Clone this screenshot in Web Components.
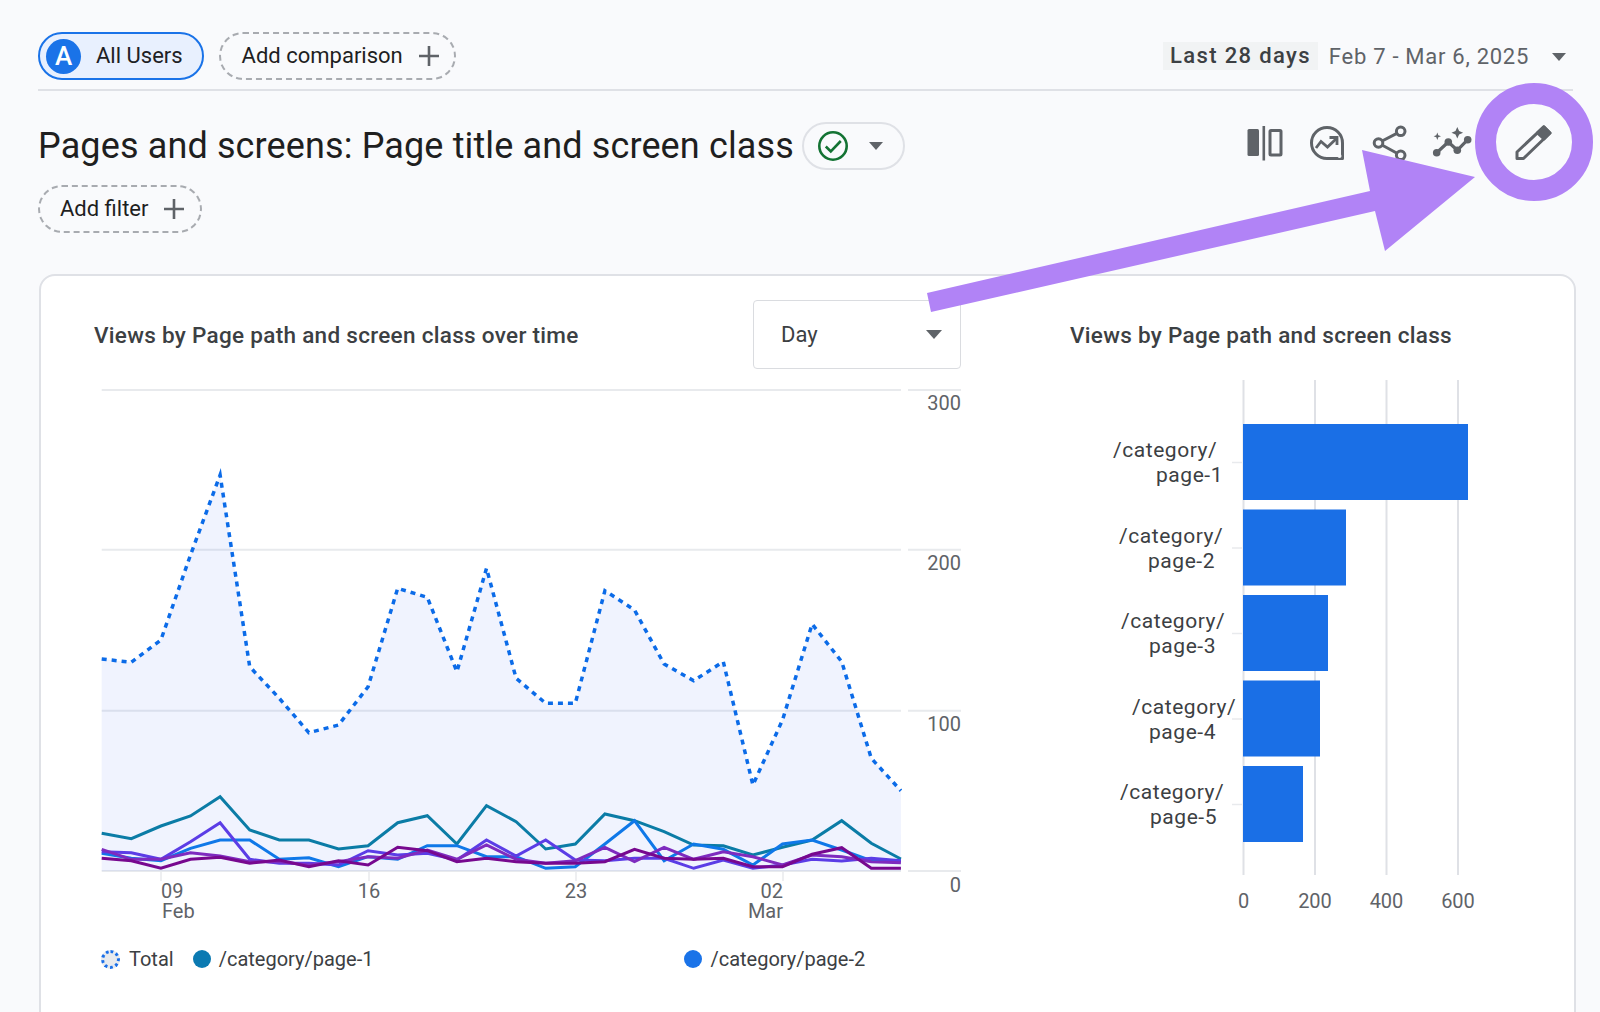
<!DOCTYPE html>
<html lang="en">
<head>
<meta charset="utf-8">
<title>Pages and screens</title>
<style>
  html,body{margin:0;padding:0;background:#f9fafc;}
  body{font-family:Roboto,"Liberation Sans",sans-serif;color:#1f1f1f;}
</style>
</head>
<body>
<ga-app>
  <ga-bar>
    <ga-chip slot="left" variant="solid" avatar="A">All Users</ga-chip>
    <ga-chip slot="left" variant="dashed" plus style="--pl:21px;--pr:14px">Add comparison</ga-chip>
    <ga-date-range slot="right" preset="Last 28 days" range="Feb 7 - Mar 6, 2025"></ga-date-range>
  </ga-bar>
  <ga-title-row>Pages and screens: Page title and screen class</ga-title-row>
  <ga-filter-row><ga-chip variant="dashed" plus style="--pl:20px;--pr:15px">Add filter</ga-chip></ga-filter-row>
  <ga-card>
    <ga-panel slot="left" heading="Views by Page path and screen class over time" select="Day">
      <ga-line-chart></ga-line-chart>
      <ga-legend></ga-legend>
    </ga-panel>
    <ga-panel slot="right" heading="Views by Page path and screen class">
      <ga-bar-chart></ga-bar-chart>
    </ga-panel>
  </ga-card>
  <ga-annotation></ga-annotation>
</ga-app>

<script>
const FONT = 'Roboto,"Liberation Sans",sans-serif';
function def(name, cls){ customElements.define(name, cls); }
class Base extends HTMLElement {
  render(html){ (this.shadowRoot || this.attachShadow({mode:'open'})).innerHTML = html; }
}

def('ga-app', class extends Base { connectedCallback(){ this.render(`<style>
  :host{display:block;position:relative;width:1600px;height:1012px;overflow:hidden;padding-top:32px;box-sizing:border-box;background:#f9fafc;font-family:${FONT};}
</style><slot></slot>`);} });

def('ga-bar', class extends Base { connectedCallback(){ this.render(`<style>
  :host{display:flex;justify-content:space-between;margin:0 27px 0 38px;padding-bottom:9px;border-bottom:2px solid #dfe1e6;}
  .g{display:flex;gap:15px;align-items:center}
</style><div class="g"><slot name="left"></slot></div><div class="g"><slot name="right"></slot></div>`);} });

def('ga-chip', class extends Base { connectedCallback(){
  const solid = this.getAttribute('variant')==='solid';
  const av = this.getAttribute('avatar');
  this.render(`<style>
  :host{display:inline-flex;align-items:center;box-sizing:border-box;height:48px;border-radius:24px;font-size:22px;line-height:1;white-space:nowrap;color:#1f1f1f;
    ${solid?'background:#e8f0fe;border:2px solid #1a73e8;padding:0 19px 0 6px;gap:15px;color:#202124;':'border:2px dashed #a8abb0;padding:0 var(--pr,14px) 0 var(--pl,20px);gap:15px;'}}
  .av{width:35px;height:35px;border-radius:50%;background:#1a73e8;color:#fff;display:flex;align-items:center;justify-content:center;font-size:26px;font-weight:500;}
  svg{display:block;width:22px;height:22px}
</style>${av?`<span class="av">${av}</span>`:''}<slot></slot>${this.hasAttribute('plus')?`<svg viewBox="0 0 22 22"><path d="M11 1v20M1 11h20" stroke="#5f6368" stroke-width="2.6" fill="none"/></svg>`:''}`);
} });

def('ga-date-range', class extends Base { connectedCallback(){ this.render(`<style>
  :host{display:flex;align-items:center;font-size:22px;height:48px;color:#5f6368;}
  .p{background:#f1f3f4;color:#3c4043;font-weight:500;height:28px;line-height:28px;padding:0 7px 0 7px;letter-spacing:1.35px;margin-right:11px;}
  .r{letter-spacing:.72px;}
  svg{display:block;width:14px;height:8px;margin:1px 7px 0 23px}
</style><span class="p">${this.getAttribute('preset')}</span><span class="r">${this.getAttribute('range')}</span><svg viewBox="0 0 14 8"><path d="M0 0h14L7 8z" fill="#5f6368"/></svg>`);} });

const ICONS = {
 split:`<svg viewBox="1244.5 121 40 40"><rect x="1247" y="127" width="11.5" height="27" rx="1.5" fill="#5f6368"/><rect x="1262" y="124" width="2.6" height="34.5" fill="#5f6368"/><rect x="1269.5" y="128.5" width="11" height="24.5" rx="1" fill="none" stroke="#5f6368" stroke-width="3"/></svg>`,
 insights:`<svg viewBox="1307 121 40 40"><path d="M1327 125.5a15.5 15.5 0 0 1 15.5 15.5v15.5H1327a15.5 15.5 0 0 1 0-31z" fill="none" stroke="#5f6368" stroke-width="3" stroke-linejoin="round"/><path d="M1316 146l5-6.5 6.5 5.5 9-8.500" fill="none" stroke="#5f6368" stroke-width="2.800"/><path d="M1329.500 135.500h7.500v7.500" fill="none" stroke="#5f6368" stroke-width="2.800"/><circle cx="1339.500" cy="154" r="2" fill="#f9fafc"/></svg>`,
 share:`<svg viewBox="1370 121 40 40"><path d="M1378.300 141L1400.700 129.300M1378.300 141L1400.700 153.300" stroke="#5f6368" stroke-width="3" fill="none"/><g fill="#f9fafc" stroke="#5f6368" stroke-width="3"><circle cx="1400.700" cy="129.300" r="4.300"/><circle cx="1378.500" cy="141" r="4.300"/><circle cx="1400.700" cy="153.300" r="4.300"/></g></svg>`,
 spark:`<svg viewBox="1432 121 40 40"><path d="M1436.700 150.700L1448.300 140L1457.300 148.300L1467.700 137.700" stroke="#5f6368" stroke-width="3.200" fill="none"/><g fill="#5f6368"><circle cx="1436.700" cy="150.700" r="3.800"/><circle cx="1448.300" cy="140" r="3.800"/><circle cx="1457.300" cy="148.300" r="3.800"/><circle cx="1467.700" cy="137.700" r="3.800"/><path d="M1457.300 125l1.800 4 4 1.800-4 1.800-1.800 4-1.800-4-4-1.800 4-1.800z"/><path d="M1437.300 130.500l1 2.700 2.700 1-2.700 1-1 2.700-1-2.700-2.700-1 2.700-1z"/></g></svg>`,
 pencil:`<svg viewBox="1513 121 40 40"><path d="M1517 156.500v-6.500L1543.800 124.800 1550 131 1523.500 156.500z" fill="none" stroke="#5f6368" stroke-width="3" stroke-linejoin="round"/><path d="M1537.500 130.800L1543.800 124.800 1550 131 1544 137z" fill="#5f6368" stroke="#5f6368" stroke-width="3" stroke-linejoin="round"/></svg>`
};
def('ga-icon', class extends Base { connectedCallback(){ this.render(`<style>:host{display:block;width:40px;height:40px}svg{display:block;width:40px;height:40px}</style>${ICONS[this.getAttribute('name')]}`);} });

def('ga-title-row', class extends Base { connectedCallback(){ this.render(`<style>
  :host{display:flex;align-items:center;justify-content:space-between;margin:31px 47px 0 38px;height:48px;}
  .l{display:flex;align-items:center;gap:8px}
  h1{margin:0;font-weight:400;font-size:36px;line-height:48px;color:#1f1f1f;letter-spacing:.13px;white-space:nowrap}
  .st{display:flex;align-items:center;box-sizing:border-box;width:103px;height:48px;border:2px solid #dfe1e6;border-radius:24px;padding-left:13px;}
  .st svg{display:block}
  .ic{display:flex;gap:22.500px;margin-top:-6px}
  .ic ga-icon:last-child{margin-left:18.500px}
</style><div class="l"><h1><slot></slot></h1><div class="st"><svg width="32" height="32" viewBox="0 0 32 32"><circle cx="16" cy="16" r="13.700" fill="none" stroke="#137333" stroke-width="2.600"/><path d="M8.800 16.500l5 5 10-10.500" fill="none" stroke="#137333" stroke-width="2.600"/></svg><svg width="14" height="8" viewBox="0 0 14 8" style="margin-left:20px"><path d="M0 0h14L7 8z" fill="#5f6368"/></svg></div></div>
<div class="ic"><ga-icon name="split"></ga-icon><ga-icon name="insights"></ga-icon><ga-icon name="share"></ga-icon><ga-icon name="spark"></ga-icon><ga-icon name="pencil"></ga-icon></div>`);} });

def('ga-filter-row', class extends Base { connectedCallback(){ this.render(`<style>:host{display:flex;margin:15px 0 0 38px}</style><slot></slot>`);} });

def('ga-card', class extends Base { connectedCallback(){ this.render(`<style>
  :host{display:grid;grid-template-columns:960px 1fr;margin:41px 24px 0 39px;height:770px;box-sizing:border-box;background:#fff;border:2px solid #dfe1e6;border-radius:16px;}
</style><slot name="left"></slot><slot name="right"></slot>`);} });

def('ga-panel', class extends Base { connectedCallback(){
  const sel = this.getAttribute('select');
  this.render(`<style>
  :host{display:flex;flex-direction:column;padding-top:24px;min-width:0;}
  .h{display:flex;align-items:center;justify-content:space-between;height:69px;padding:0 40px 0 ${sel?53:69}px;box-sizing:border-box;}
  h2{margin:0;font-size:22.500px;font-weight:500;color:#3c4043;letter-spacing:.3px;white-space:nowrap}
  .s{display:flex;align-items:center;justify-content:space-between;box-sizing:border-box;width:208px;height:69px;border:1.500px solid #dadce0;border-radius:4px;padding:0 18px 0 27px;font-size:22px;color:#3c4043;background:#fff;}
</style><div class="h"><h2>${this.getAttribute('heading')}</h2>${sel?`<div class="s">${sel}<svg width="16" height="9" viewBox="0 0 16 9"><path d="M0 0h16L8 9z" fill="#5f6368"/></svg></div>`:''}</div><slot></slot>`);
} });

def('ga-line-chart', class extends Base { connectedCallback(){
  const X = i => 101.7 + 29.6*i, Y = z => 440 + z/3;
  const S = {
   total:[657,667,600,345,105,680,775,878,855,740,445,472,695,385,715,790,790,452,510,672,722,665,1035,840,552,665,955,1052],
   teal:[1180,1196,1158,1128,1070,1170,1200,1200,1227,1217,1148,1127,1212,1097,1145,1227,1212,1122,1142,1175,1215,1217,1245,1222,1200,1142,1210,1257],
   blue:[1240,1255,1262,1225,1200,1200,1258,1253,1280,1250,1258,1217,1217,1250,1250,1285,1280,1212,1142,1262,1212,1228,1275,1212,1200,1230,1262,1262],
   indigo:[1235,1238,1258,1205,1148,1258,1270,1270,1275,1232,1245,1240,1260,1200,1248,1200,1260,1262,1255,1255,1285,1260,1285,1275,1258,1263,1255,1262],
   purple:[1228,1258,1258,1238,1248,1265,1265,1275,1265,1250,1255,1230,1258,1215,1258,1270,1262,1222,1265,1222,1258,1235,1250,1275,1245,1250,1265,1268],
   dark:[1255,1262,1285,1258,1252,1270,1260,1280,1262,1275,1222,1232,1265,1255,1265,1270,1270,1265,1228,1255,1258,1255,1280,1280,1243,1223,1285,1285]
  };
  const pts = a => a.map((z,i)=>X(i).toFixed(1)+','+Y(z).toFixed(1)).join(' ');
  const grid = [390,549.700,710.700,871].map(y=>`<path d="M101.700 ${y}H901M908 ${y}H961" stroke="#e8eaed" stroke-width="2"/>`).join('');
  const line = (k,c,w=3)=>`<polyline points="${pts(S[k])}" fill="none" stroke="${c}" stroke-width="${w}" stroke-linejoin="miter"/>`;
  const t = (x,y,s,a='middle')=>`<text x="${x}" y="${y}" text-anchor="${a}">${s}</text>`;
  const ticks = [161,369,576,783].map(x=>`<path d="M${x} 872v9" stroke="#e8eaed" stroke-width="1.500"/>`).join('');
  this.render(`<style>:host{display:block}svg{display:block;width:960px;height:571px;font:20px ${FONT};fill:#5f6368}</style>
  <svg viewBox="41 369 960 571">
    ${grid}${ticks}
    <polygon points="101.700,871 ${pts(S.total)} 901,871" fill="#3c64f0" fill-opacity=".08"/>
    ${line('teal','#0b7ca6')}${line('blue','#0f78e8')}${line('indigo','#5b3de6')}${line('purple','#7e2bbf')}${line('dark','#77088f')}
    <polyline points="${pts(S.total)}" fill="none" stroke="#0b6be8" stroke-width="3.500" stroke-dasharray="5 5"/>
    ${t(961,410,'300','end')}${t(961,570,'200','end')}${t(961,731,'100','end')}${t(961,892,'0','end')}
    ${t(161,898,'09','start')}${t(162,918,'Feb','start')}${t(369,898,'16')}${t(576,898,'23')}${t(783,898,'02','end')}${t(783,918,'Mar','end')}
  </svg>`);
} });

def('ga-legend', class extends Base { connectedCallback(){ this.render(`<style>
  :host{display:flex;align-items:center;height:24px;padding-left:60px;margin-top:7px;font-size:20px;color:#3c4043;white-space:nowrap}
  .d{width:18px;height:18px;border-radius:50%;margin-right:8px;flex:none}
  .t{box-sizing:border-box;width:19px;height:19px;background:#e8eaed;border:3.500px dotted #1a6fe8;margin-right:9px}
  .i2{margin-left:19px}.i3{margin-left:311px}
  span.x{display:flex;align-items:center}
</style><span class="x"><i class="d t"></i>Total</span><span class="x i2"><i class="d" style="background:#0b7ab2"></i>/category/page-1</span><span class="x i3"><i class="d" style="background:#1a73e8"></i>/category/page-2</span>`);} });

def('ga-bar-chart', class extends Base { connectedCallback(){
  const bars = [[1470,"1115","1158"],[1348,"1121","1150"],[1330,"1123","1151"],[1322,"1134","1151"],[1305,"1122","1152"]];
  const gl = [1245.500,1317,1388.500,1460].map(x=>`<path d="M${x} 380V875" stroke="#dfe1e6" stroke-width="2"/>`).join('');
  const rows = bars.map((b,i)=>{
    const y = 424 + 85.500*i;
    return `<path d="M1234 ${y+38.500}h10" stroke="#e8eaed" stroke-width="1.500"/><rect x="1245" y="${y}" width="${b[0]-1245}" height="76" fill="#1a6fe6"/>
    <text class="l" x="${b[1]}" y="${y+33}">/category/</text><text class="l" x="${b[2]}" y="${y+58}">page-${i+1}</text>`;
  }).join('');
  const ax = [[1245.500,'0'],[1317,'200'],[1388.500,'400'],[1460,'600']].map(a=>`<text x="${a[0]}" y="908" text-anchor="middle">${a[1]}</text>`).join('');
  this.render(`<style>:host{display:block}svg{display:block;width:573px;height:643px;font:20px ${FONT};fill:#5f6368}
  .l{fill:#3c4043;font-size:21px;letter-spacing:.55px}</style>
  <svg viewBox="1003 369 573 643">${gl}${rows}${ax}</svg>`);
} });

def('ga-annotation', class extends Base { connectedCallback(){ this.render(`<style>
  :host{position:absolute;inset:0;pointer-events:none}svg{display:block;width:1600px;height:1012px}
</style><svg viewBox="0 0 1600 1012"><circle cx="1534" cy="142" r="48.500" fill="none" stroke="#b183f6" stroke-width="21"/><polygon points="927,293 931,312 1375,211 1385,251 1475,177 1362,150 1370,191" fill="#b183f6"/></svg>`);} });
</script>
</body>
</html>
